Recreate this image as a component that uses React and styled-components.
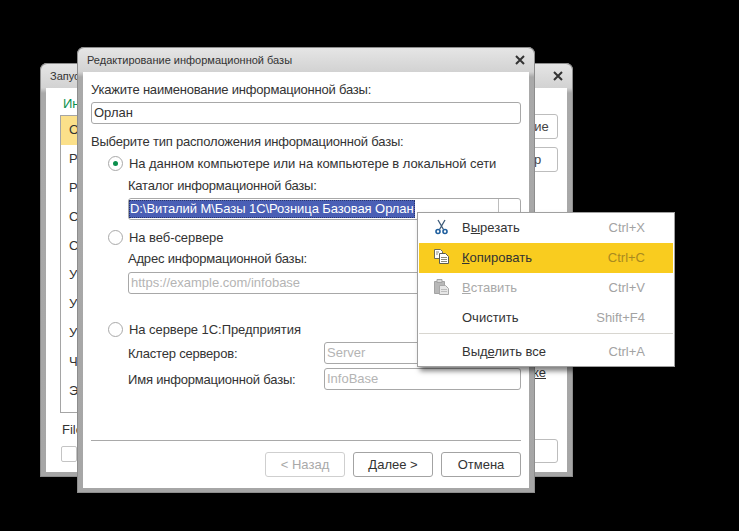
import React from "react";
import styled, { createGlobalStyle } from "styled-components";

const GlobalStyle = createGlobalStyle`
    html, body {
        margin: 0;
        padding: 0;
        background: #000;
    }
    body {
        font-family: "Liberation Sans", Arial, sans-serif;
        font-size: 13px;
        color: #333;
    }
`

const Desktop = styled.div`
    position: relative;
    width: 739px;
    height: 531px;
    overflow: hidden;
    background: #000;
`

const Window = styled.div`
    position: absolute;
    left: ${(p) => p.$x}px;
    top: ${(p) => p.$y}px;
    width: ${(p) => p.$w}px;
    height: ${(p) => p.$h}px;
    box-sizing: border-box;
    display: flex;
    flex-direction: column;
    padding: 0 6px 5px;
    border-radius: 7px 7px 0 0;
    background: linear-gradient(#e6e6e6 0, #d2d2d2 25px, #a9a9a9 30px, #a6a6a6 100%);
    box-shadow: inset 0 0 0 1px #8d8d8d;
`

const TitleBar = styled.div`
    height: 25px;
    flex: none;
    display: flex;
    align-items: center;
    justify-content: space-between;
    padding-left: 4px;
    font-size: 11px;
    color: #333;
`

const Close = styled.svg`
    width: 10px;
    height: 10px;
    margin-right: 4px;
`

const Content = styled.div`
    flex: 1;
    min-height: 0;
    background: #fff;
    box-sizing: border-box;
    display: flex;
    flex-direction: column;
    overflow: hidden;
`

const BackBody = styled(Content)`
    padding: 9px 9px 0 14px;
`

const BackColumns = styled.div`
    display: flex;
    justify-content: space-between;
    flex: 1;
`

const BackLeft = styled.div`
    width: 370px;
    display: flex;
    flex-direction: column;
`

const BackRight = styled.div`
    width: 119px;
    display: flex;
    flex-direction: column;
    gap: 8px;
    padding-top: 17px;
`

const GreenTitle = styled.div`
    height: 18px;
    line-height: 14px;
    padding-left: 3px;
    color: #0b8f4d;
`

const BaseList = styled.div`
    height: 298px;
    border: 1px solid #a5a5a5;
    box-sizing: border-box;
    display: flex;
    flex-direction: column;
`

const BaseRow = styled.div`
    height: 29px;
    flex: none;
    line-height: 27px;
    padding-left: 8px;
    background: ${(p) => (p.$active ? "#fbe08a" : "transparent")};
`

const FileLine = styled.div`
    padding: 9px 0 0 2px;
    height: 15px;
    line-height: 15px;
`

const CheckBox = styled.div`
    width: 14px;
    height: 14px;
    margin: 9px 0 0 1px;
    border: 1px solid #c4c4c4;
    border-radius: 2px;
`

const SideButton = styled.div`
    height: 25px;
    flex: none;
    box-sizing: border-box;
    border: 1px solid #bdbdbd;
    border-radius: 3px;
    text-align: center;
    line-height: 23px;
    color: #444;
`

const BackLink = styled.div`
    margin-top: 186px;
    text-align: right;
    padding-right: 12px;
    line-height: 14px;
    text-decoration: underline;
    color: #333;
`

const ExitButton = styled(SideButton)`
    margin-top: 51px;
    height: 24px;
`

const FrontBody = styled(Content)`
    padding: 11px 8px 0 8px;
`

const Label = styled.div`
    line-height: 14px;
    letter-spacing: -0.2px;
    padding-left: ${(p) => p.$indent || 0}px;
    margin-top: ${(p) => p.$top || 0}px;
`

const Field = styled.div`
    box-sizing: border-box;
    height: 22px;
    flex: ${(p) => (p.$grow ? 1 : "none")};
    margin-left: ${(p) => p.$indent || 0}px;
    margin-top: ${(p) => p.$top || 0}px;
    border: 1px solid #a8a8a8;
    border-radius: 3px;
    display: flex;
    align-items: center;
    padding-left: ${(p) => p.$pad ?? 2}px;
    line-height: 18px;
    color: ${(p) => (p.$hint ? "#b4b4b4" : "#333")};
    overflow: hidden;
    white-space: nowrap;
`

const Selected = styled.span`
    flex: none;
    background: #4a5fb5;
    color: #fff;
    height: 18px;
    line-height: 18px;
    padding: 0 1px;
    letter-spacing: -0.07px;
    outline: 1px dotted #27346d;
    outline-offset: -1px;
`

const DropButton = styled.div`
    margin-left: auto;
    flex: none;
    width: 21px;
    height: 100%;
    border-left: 1px solid #bdbdbd;
`

const RadioRow = styled.div`
    display: flex;
    align-items: center;
    gap: 6px;
    height: 16px;
    margin-left: 17px;
    margin-top: ${(p) => p.$top || 0}px;
    letter-spacing: -0.06px;
`

const Radio = styled.div`
    width: 15px;
    height: 15px;
    flex: none;
    box-sizing: border-box;
    border: 1px solid #a9a9a9;
    border-radius: 50%;
    display: flex;
    align-items: center;
    justify-content: center;
    &::after {
        content: "";
        display: ${(p) => (p.$checked ? "block" : "none")};
        width: 5px;
        height: 5px;
        border-radius: 50%;
        background: #0b8f4d;
    }
`

const ServerRow = styled.div`
    display: flex;
    align-items: center;
    margin-top: ${(p) => p.$top || 0}px;
    padding-left: 37px;
`

const ServerLabel = styled.div`
    width: 196px;
    flex: none;
    letter-spacing: -0.2px;
`

const Spring = styled.div`
    flex: 1;
`

const Separator = styled.div`
    height: 1px;
    flex: none;
    background: #a9a9a9;
`

const Footer = styled.div`
    display: flex;
    justify-content: flex-end;
    gap: 8px;
    padding: 11px 0 11px;
`

const Button = styled.div`
    width: 80px;
    height: 25px;
    box-sizing: border-box;
    border: 1px solid ${(p) => (p.$disabled ? "#cfcfcf" : "#a3a3a3")};
    border-radius: 3px;
    display: flex;
    align-items: center;
    justify-content: center;
    color: ${(p) => (p.$disabled ? "#a9a9a9" : "#333")};
`

const Menu = styled.div`
    position: absolute;
    left: 417px;
    top: 212px;
    width: 258px;
    box-sizing: border-box;
    padding: 0 1px;
    background: #fff;
    border: 1px solid #a0a0a0;
    box-shadow: 3px 4px 5px rgba(0, 0, 0, 0.5);
    display: flex;
    flex-direction: column;
`

const MenuRow = styled.div`
    height: 30px;
    flex: none;
    box-sizing: border-box;
    display: flex;
    align-items: center;
    padding: 0 28px 2px 15px;
    background: ${(p) => (p.$active ? "#f9cc1f" : "transparent")};
    color: ${(p) => (p.$disabled ? "#a9a9a9" : "#333")};
    &:last-child {
        height: 29px;
        padding-bottom: 0;
    }
`

const MenuIcon = styled.svg`
    width: 16px;
    height: 16px;
    flex: none;
    margin-right: 12px;
`

const IconGap = styled.div`
    width: 28px;
    flex: none;
`

const Key = styled.span`
    margin-left: auto;
    color: ${(p) => (p.$active ? "#a98a20" : "#a3a3a3")};
`

const Hot = styled.span`
    text-decoration: underline;
`

const MenuSeparator = styled.div`
    height: 1px;
    margin: 0 0 3px;
    background: #d8d6d0;
`

const CloseIcon = () => (
    <Close viewBox="0 0 10 10">
        <path d="M1 1 9 9M9 1 1 9" stroke="#333" strokeWidth="2" />
    </Close>
)

const ScissorsIcon = () => (
    <MenuIcon viewBox="0 0 16 16">
        <path d="M4 1 9.5 10.5M11 1 5.5 10.5" stroke="#3d5a78" strokeWidth="1.3" fill="none" />
        <circle cx="4" cy="12.5" r="2" fill="none" stroke="#1f5f9e" strokeWidth="1.6" />
        <circle cx="11" cy="12.5" r="2" fill="none" stroke="#1f5f9e" strokeWidth="1.6" />
    </MenuIcon>
)

const CopyIcon = () => (
    <MenuIcon viewBox="0 0 16 16">
        <path d="M.5 .5h6l2 2v7h-8z" fill="#fff" stroke="#6b6b5a" />
        <path d="M5.5 4.5h6l3 3v7h-9z" fill="#fff" stroke="#5c5c50" />
        <path d="M2 3h3M2 5h2M7 8.5h6M7 10.5h6M7 12.5h6" stroke="#8a8a7a" />
    </MenuIcon>
)

const PasteIcon = () => (
    <MenuIcon viewBox="0 0 16 16">
        <path d="M.5 2.5h10v12H.5z" fill="#b8b8b8" stroke="#a3a3a3" />
        <path d="M3 .5h5v3H3z" fill="#d8d8d8" stroke="#a3a3a3" />
        <path d="M5.5 6.5h6l3 3v6h-9z" fill="#e6e6e6" stroke="#a8a8a8" />
        <path d="M7 10.5h6M7 12.5h6" stroke="#bdbdbd" />
    </MenuIcon>
)

const bases = ["Орлан", "Розница", "Розница демо", "Склад", "Склад 2", "Управление", "Учет", "Управление 2", "Чистая", "Эксперимент"]

const App = () => {
    return (
        <Desktop>
            <GlobalStyle />
            <Window $x={40} $y={63} $w={533} $h={414}>
                <TitleBar>
                    Запуск 1С:Предприятия
                    <CloseIcon />
                </TitleBar>
                <BackBody>
                    <BackColumns>
                        <BackLeft>
                            <GreenTitle>Информационные базы</GreenTitle>
                            <BaseList>
                                {bases.map((name, i) => (
                                    <BaseRow key={name} $active={i === 0}>{name}</BaseRow>
                                ))}
                            </BaseList>
                            <FileLine>File=</FileLine>
                            <CheckBox />
                        </BackLeft>
                        <BackRight>
                            <SideButton>1С:Предприятие</SideButton>
                            <SideButton>Конфигуратор</SideButton>
                            <BackLink>Настройке</BackLink>
                            <ExitButton />
                        </BackRight>
                    </BackColumns>
                </BackBody>
            </Window>
            <Window $x={77} $y={47} $w={458} $h={446}>
                <TitleBar>
                    Редактирование информационной базы
                    <CloseIcon />
                </TitleBar>
                <FrontBody>
                    <Label>Укажите наименование информационной базы:</Label>
                    <Field $top={5}>Орлан</Field>
                    <Label $top={11}>Выберите тип расположения информационной базы:</Label>
                    <RadioRow $top={6}>
                        <Radio $checked />
                        На данном компьютере или на компьютере в локальной сети
                    </RadioRow>
                    <Label $indent={37} $top={8}>Каталог информационной базы:</Label>
                    <Field $indent={37} $top={5} $pad={0}>
                        <Selected>D:\Виталий М\Базы 1С\Розница Базовая Орлан</Selected>
                        <DropButton />
                    </Field>
                    <RadioRow $top={9}>
                        <Radio />
                        На веб-сервере
                    </RadioRow>
                    <Label $indent={37} $top={7}>Адрес информационной базы:</Label>
                    <Field $indent={37} $top={6} $hint>https://example.com/infobase</Field>
                    <RadioRow $top={27}>
                        <Radio />
                        На сервере 1С:Предприятия
                    </RadioRow>
                    <ServerRow $top={5}>
                        <ServerLabel>Кластер серверов:</ServerLabel>
                        <Field $grow $hint>Server</Field>
                    </ServerRow>
                    <ServerRow $top={4}>
                        <ServerLabel>Имя информационной базы:</ServerLabel>
                        <Field $grow $hint>InfoBase</Field>
                    </ServerRow>
                    <Spring />
                    <Separator />
                    <Footer>
                        <Button $disabled>&lt; Назад</Button>
                        <Button>Далее &gt;</Button>
                        <Button>Отмена</Button>
                    </Footer>
                </FrontBody>
            </Window>
            <Menu>
                <MenuRow>
                    <ScissorsIcon />
                    <span>В<Hot>ы</Hot>резать</span>
                    <Key>Ctrl+X</Key>
                </MenuRow>
                <MenuRow $active>
                    <CopyIcon />
                    <span><Hot>К</Hot>опировать</span>
                    <Key $active>Ctrl+C</Key>
                </MenuRow>
                <MenuRow $disabled>
                    <PasteIcon />
                    <span><Hot>В</Hot>ставить</span>
                    <Key>Ctrl+V</Key>
                </MenuRow>
                <MenuRow>
                    <IconGap />
                    <span>Очистить</span>
                    <Key>Shift+F4</Key>
                </MenuRow>
                <MenuSeparator />
                <MenuRow>
                    <IconGap />
                    <span>Выд<Hot>е</Hot>лить все</span>
                    <Key>Ctrl+A</Key>
                </MenuRow>
            </Menu>
        </Desktop>
    )
}

export default App
